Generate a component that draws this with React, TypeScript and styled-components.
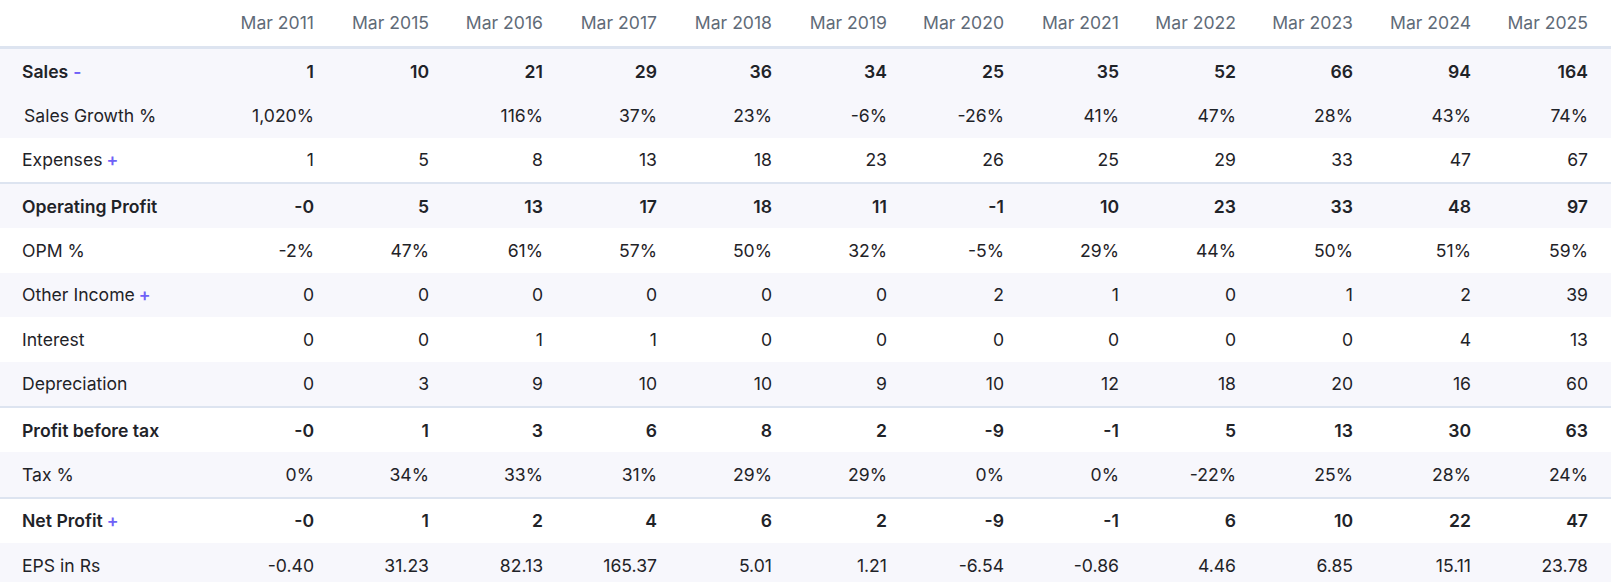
import styled, { createGlobalStyle } from "styled-components";

const GlobalStyle = createGlobalStyle`
  html, body {
    margin: 0;
    padding: 0;
    background: #ffffff;
  }
  body {
    font-family: Inter, "Noto Sans", "Liberation Sans", sans-serif;
    color: #1f2328;
  }
`;

type Row = {
    label: string;
    toggle?: "+" | "-";
    values: string[];
    bold?: boolean;
    shade?: boolean;
    divider?: boolean;
    sub?: boolean;
};

const years = [
    "Mar 2011", "Mar 2015", "Mar 2016", "Mar 2017", "Mar 2018", "Mar 2019",
    "Mar 2020", "Mar 2021", "Mar 2022", "Mar 2023", "Mar 2024", "Mar 2025",
];

// column widths worked out from the reference, label column first
const colWidths = [220, 104, 115, 114, 114, 115, 115, 117, 115, 117, 117, 118, 130];

const rows: Row[] = [
    { label: "Sales", toggle: "-", bold: true, shade: true, values: ["1", "10", "21", "29", "36", "34", "25", "35", "52", "66", "94", "164"] },
    { label: "Sales Growth %", sub: true, shade: true, values: ["1,020%", "", "116%", "37%", "23%", "-6%", "-26%", "41%", "47%", "28%", "43%", "74%"] },
    { label: "Expenses", toggle: "+", values: ["1", "5", "8", "13", "18", "23", "26", "25", "29", "33", "47", "67"] },
    { label: "Operating Profit", bold: true, shade: true, divider: true, values: ["-0", "5", "13", "17", "18", "11", "-1", "10", "23", "33", "48", "97"] },
    { label: "OPM %", values: ["-2%", "47%", "61%", "57%", "50%", "32%", "-5%", "29%", "44%", "50%", "51%", "59%"] },
    { label: "Other Income", toggle: "+", shade: true, values: ["0", "0", "0", "0", "0", "0", "2", "1", "0", "1", "2", "39"] },
    { label: "Interest", values: ["0", "0", "1", "1", "0", "0", "0", "0", "0", "0", "4", "13"] },
    { label: "Depreciation", shade: true, values: ["0", "3", "9", "10", "10", "9", "10", "12", "18", "20", "16", "60"] },
    { label: "Profit before tax", bold: true, divider: true, values: ["-0", "1", "3", "6", "8", "2", "-9", "-1", "5", "13", "30", "63"] },
    { label: "Tax %", shade: true, values: ["0%", "34%", "33%", "31%", "29%", "29%", "0%", "0%", "-22%", "25%", "28%", "24%"] },
    { label: "Net Profit", toggle: "+", bold: true, divider: true, values: ["-0", "1", "2", "4", "6", "2", "-9", "-1", "6", "10", "22", "47"] },
    { label: "EPS in Rs", shade: true, values: ["-0.40", "31.23", "82.13", "165.37", "5.01", "1.21", "-6.54", "-0.86", "4.46", "6.85", "15.11", "23.78"] },
];

function App() {
    return (
        <>
            <GlobalStyle />
            <Table>
                <colgroup>
                    {colWidths.map((w, idx) => (
                        <col key={idx} style={{ width: w }} />
                    ))}
                </colgroup>
                <thead>
                    <tr>
                        <HeadCell />
                        {years.map((y) => (
                            <HeadCell key={y}>{y}</HeadCell>
                        ))}
                    </tr>
                </thead>
                <tbody>
                    {rows.map((row) => (
                        <BodyRow key={row.label} $shade={row.shade} $divider={row.divider}>
                            <LabelCell $bold={row.bold} $sub={row.sub}>
                                {row.label}
                                {row.toggle && <Toggle $minus={row.toggle === "-"}>{row.toggle}</Toggle>}
                            </LabelCell>
                            {row.values.map((v, idx) => (
                                <NumCell key={idx} $bold={row.bold}>{v}</NumCell>
                            ))}
                        </BodyRow>
                    ))}
                </tbody>
            </Table>
        </>
    );
}

const Table = styled.table`
  width: 1611px;
  table-layout: fixed;
  border-collapse: separate;
  border-spacing: 0;
  font-size: 17.6px;
  line-height: 1.2;
`;

const HeadCell = styled.th`
  height: 46px;
  padding: 0 10px 0 0;
  text-align: right;
  vertical-align: middle;
  font-weight: 400;
  color: #5f6b78;
  border-bottom: 3px solid #dde4f0;
  white-space: nowrap;

  &:last-child {
    padding-right: 23px;
  }
`;

const BodyRow = styled.tr<{ $shade?: boolean; $divider?: boolean }>`
  background: ${(p) => (p.$shade ? "#f7f7fc" : "#ffffff")};

  td {
    height: 44.36px;
    border-top: ${(p) => (p.$divider ? "2px solid #dde4f0" : "0")};
  }
`;

const LabelCell = styled.td<{ $bold?: boolean; $sub?: boolean }>`
  padding: 0 0 0 ${(p) => (p.$sub ? "24px" : "22px")};
  text-align: left;
  vertical-align: middle;
  white-space: nowrap;
  font-weight: ${(p) => (p.$bold ? 600 : 400)};
  color: #1f2328;
`;

const NumCell = styled.td<{ $bold?: boolean }>`
  padding: 0 10px 0 0;
  text-align: right;
  vertical-align: middle;
  white-space: nowrap;
  font-weight: ${(p) => (p.$bold ? 600 : 400)};
  color: #1f2328;

  &:last-child {
    padding-right: 23px;
  }
`;

const Toggle = styled.span<{ $minus?: boolean }>`
  margin-left: ${(p) => (p.$minus ? "5px" : "4px")};
  color: #6f61f7;
  font-weight: 600;
`;

export default App;
